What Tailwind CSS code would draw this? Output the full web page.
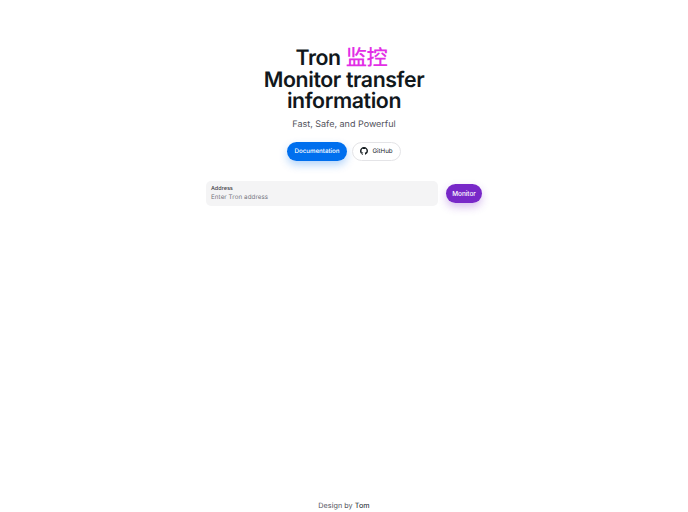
<!DOCTYPE html>
<html lang="en">
<head>
    <meta charset="UTF-8">
    <meta name="viewport" content="width=device-width, initial-scale=1.0">
    <title>Tron Monitor</title>
    <script src="https://cdn.jsdelivr.net/npm/@tailwindcss/browser@4"></script>
</head>
<body class="bg-white antialiased [text-rendering:geometricPrecision] font-['Inter','Noto_Sans_CJK_SC',sans-serif]">
    <div class="flex flex-col h-[512px] overflow-hidden">
        <main class="flex-1 flex flex-col items-center pt-[48px]">
            <!-- Title -->
            <h1 class="w-[180px] text-center text-[21.3px] leading-[21.5px] font-semibold tracking-[-0.4px] text-[#11181c]">
                Tron <span class="inline-block mr-[5px] leading-[21.5px] font-medium text-[#e22fe6]">监控</span><br>Monitor transfer information
            </h1>
            <p class="mt-[4.5px] text-[9px] leading-[16px] text-[#52525b]">Fast, Safe, and Powerful</p>

            <!-- Buttons -->
            <div class="mt-[8.5px] flex items-center gap-[5px]">
                <a class="w-[60px] h-[19px] pt-[1.5px] flex items-center justify-center rounded-full bg-[#006fee] text-white text-[6.2px] font-medium shadow-[0_4px_8px_rgba(0,111,238,0.3)]">Documentation</a>
                <a class="w-[49px] h-[19px] flex items-center justify-center gap-[4px] rounded-full border-[1.5px] border-[#e4e4e7] bg-white text-[#11181c] text-[6.2px]">
                    <svg class="w-[8px] h-[8px]" viewBox="0 0 16 16" fill="#11181c"><path d="M8 0C3.58 0 0 3.58 0 8c0 3.54 2.29 6.53 5.47 7.59.4.07.55-.17.55-.38 0-.19-.01-.82-.01-1.49-2.01.37-2.53-.49-2.69-.94-.09-.23-.48-.94-.82-1.13-.28-.15-.68-.52-.01-.53.63-.01 1.08.58 1.23.82.72 1.21 1.87.87 2.33.66.07-.52.28-.87.51-1.07-1.78-.2-3.64-.89-3.64-3.95 0-.87.31-1.59.82-2.15-.08-.2-.36-1.02.08-2.12 0 0 .67-.21 2.2.82.64-.18 1.32-.27 2-.27s1.36.09 2 .27c1.53-1.04 2.2-.82 2.2-.82.44 1.1.16 1.92.08 2.12.51.56.82 1.27.82 2.15 0 3.07-1.87 3.75-3.65 3.95.29.25.54.73.54 1.48 0 1.07-.01 1.93-.01 2.2 0 .21.15.46.55.38A8.01 8.01 0 0 0 16 8c0-4.42-3.58-8-8-8z"/></svg>
                    <span class="pt-[1.5px]">GitHub</span>
                </a>
            </div>

            <!-- Address form -->
            <div class="mt-[20px] flex items-center gap-[8px]">
                <div class="w-[232px] h-[25px] px-[5px] pt-[4px] flex flex-col rounded-[5px] bg-[#f4f4f5]">
                    <label class="text-[5.5px] leading-[9px] font-medium text-[#3f3f46]">Address</label>
                    <span class="text-[6.2px] leading-[8.5px] tracking-[0.1px] text-[#71717a]">Enter Tron address</span>
                </div>
                <button class="w-[36px] h-[19px] pt-[3.5px] rounded-full bg-[#7828c8] text-white text-[6.4px] font-medium shadow-[0_4px_8px_rgba(120,40,200,0.3)]">Monitor</button>
            </div>
        </main>

        <!-- Footer -->
        <footer class="h-[14px] pt-[1px] text-center text-[7.2px] leading-[14px] tracking-[0.05px] text-[#52525b]">
            Design by <span class="text-[#11181c]">Tom</span>
        </footer>
    </div>
</body>
</html>
